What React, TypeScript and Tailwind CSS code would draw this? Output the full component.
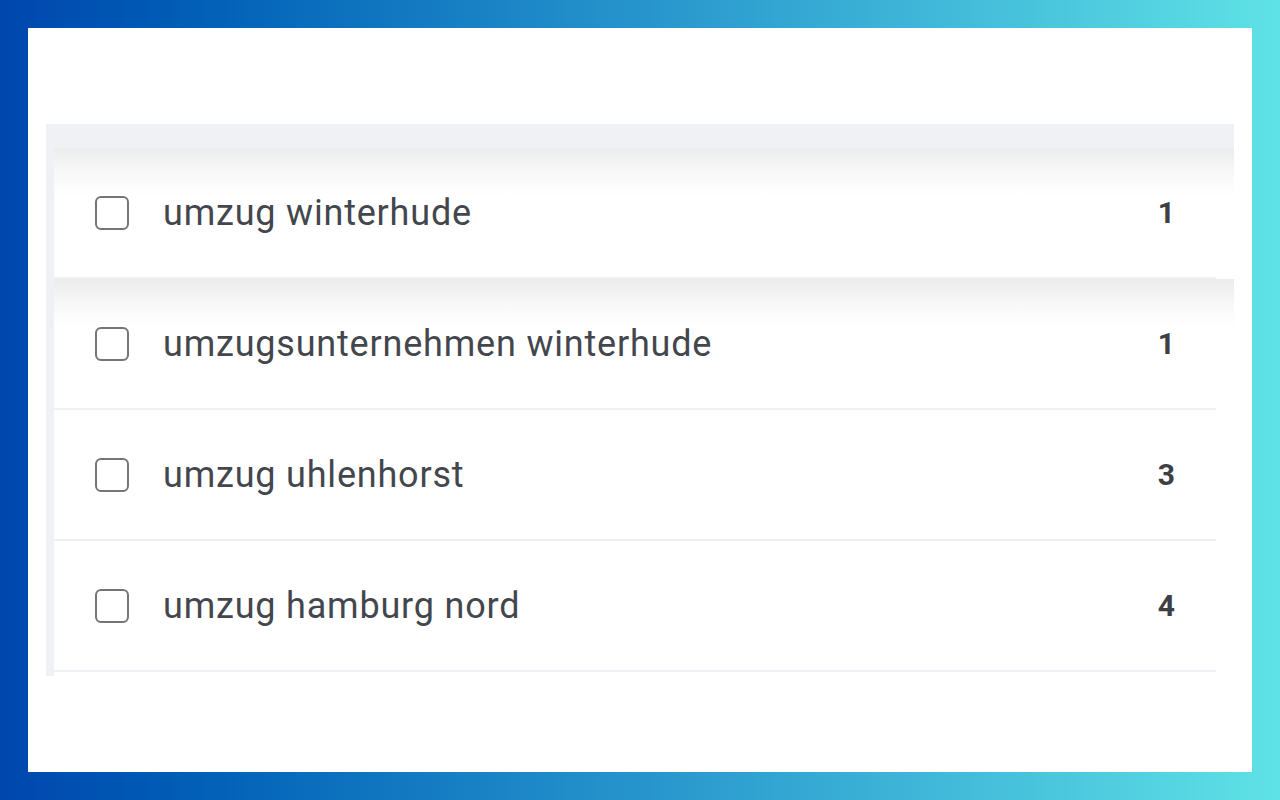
import React from "react";

const rows = [
  { label: "umzug winterhude", n: "1", shadow: true },
  { label: "umzugsunternehmen winterhude", n: "1", shadow: true },
  { label: "umzug uhlenhorst", n: "3", shadow: false },
  { label: "umzug hamburg nord", n: "4", shadow: false },
];

function Row({ label, n, shadow }: { label: string; n: string; shadow: boolean }) {
  return (
    <div className="relative h-[131px] bg-white">
      {shadow && (
        <div className="absolute left-0 top-0 h-[48px] w-[1180px] bg-gradient-to-b from-[#ececec] via-[#f8f8f8] to-white" />
      )}
      <div className="relative flex h-[129px] w-[1162px] items-center pl-[41px] pr-[41px]">
        <div className="h-[34px] w-[34px] shrink-0 rounded-[6px] border-2 border-[#757575] bg-transparent" />
        <div className="ml-[34px] flex-1 text-[36px] leading-none tracking-[0.8px] text-[#43474d]">{label}</div>
        <div className="text-[30px] font-bold leading-none text-[#3c4043]">{n}</div>
      </div>
      <div className="relative h-[2px] w-[1162px] bg-[#eef0f4]" />
    </div>
  );
}

export default function App() {
  return (
    <div
      className="h-[800px] w-[1280px] bg-gradient-to-r from-[#0046ad] to-[#5fe2e6] p-[28px]"
      style={{ fontFamily: "Roboto, 'Noto Sans', sans-serif" }}
    >
      <div className="h-[744px] w-[1224px] bg-white pl-[18px] pt-[96px]">
        <div className="w-[1188px]">
          <div className="h-[24px] bg-[#f0f1f5]" />
          <div className="flex">
            <div className="h-[528px] w-[8px] shrink-0 bg-[#f0f1f5]" />
            <div className="flex-1">
              {rows.map((r) => (
                <Row key={r.label} {...r} />
              ))}
            </div>
          </div>
        </div>
      </div>
    </div>
  );
}
